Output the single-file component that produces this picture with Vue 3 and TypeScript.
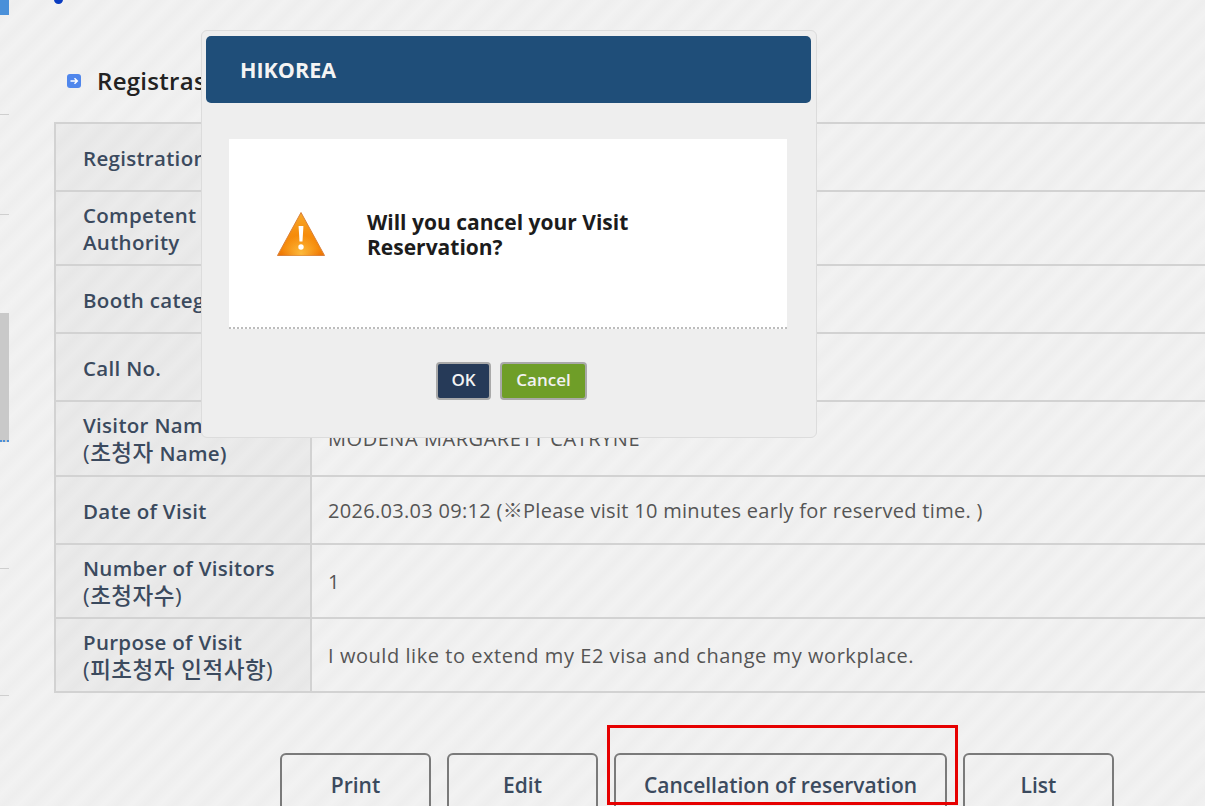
<script setup lang="ts">
interface Row {
  label: string;
  // second label line, the hangul part is set a bit larger
  ko?: string;
  rest?: string;
  value: string;
  height: number;
  tight?: boolean;
}

const rows: Row[] = [
  { label: 'Registration No.', value: '', height: 68 },
  { label: 'Competent', rest: 'Authority', value: '', height: 74 },
  { label: 'Booth category', value: '', height: 68 },
  { label: 'Call No.', value: '', height: 68 },
  { label: 'Visitor Name', ko: '(초청자', rest: ' Name)', value: 'MODENA MARGARETT CATRYNE', height: 75 },
  { label: 'Date of Visit', value: '2026.03.03 09:12 (※Please visit 10 minutes early for reserved time. )', height: 68, tight: true },
  { label: 'Number of Visitors', ko: '(초청자수)', value: '1', height: 74 },
  { label: 'Purpose of Visit', ko: '(피초청자 인적사항)', value: 'I would like to extend my E2 visa and change my workplace.', height: 74 },
]
</script>

<template>
  <div class="page">
    <aside class="side">
      <div class="side-tab"></div>
      <div class="side-line"></div>
      <div class="side-line"></div>
      <div class="side-block"></div>
      <div class="side-line third"></div>
      <div class="side-line fourth"></div>
    </aside>

    <main class="content">
      <h1 class="page-title"><span class="dot"></span><span class="title-text">Visit Reservation Details</span></h1>

      <h2 class="section-title">
        <svg class="arrow-ico" width="14" height="14" viewBox="0 0 14 14">
          <rect width="14" height="14" rx="3" fill="#4f86ec" />
          <path d="M3.5 7h6.5M7.5 4.2 10.3 7 7.5 9.8" fill="none" stroke="#fff" stroke-width="1.5" />
        </svg>
        Registrastion Information
      </h2>

      <table class="detail">
        <colgroup>
          <col class="col-label" />
          <col />
        </colgroup>
        <tbody>
          <tr v-for="row in rows" :key="row.label" :style="{ height: row.height + 'px' }">
            <th>
              <div>{{ row.label }}</div>
              <div v-if="row.ko || row.rest"><span v-if="row.ko" class="ko">{{ row.ko }}</span>{{ row.rest }}</div>
            </th>
            <td :class="{ tight: row.tight }">{{ row.value }}</td>
          </tr>
        </tbody>
      </table>

      <div class="actions">
        <button class="btn small">Print</button>
        <button class="btn small">Edit</button>
        <button class="btn wide">Cancellation of reservation</button>
        <button class="btn small">List</button>
      </div>
    </main>

    <div class="highlight"></div>

    <div class="dialog">
      <div class="dialog-head">HIKOREA</div>
      <div class="dialog-body">
        <svg class="warn" width="50" height="46" viewBox="0 0 50 46">
          <defs>
            <linearGradient id="warnFill" x1="0" y1="0" x2="0" y2="1">
              <stop offset="0" stop-color="#f7a92a" />
              <stop offset="0.5" stop-color="#f68d0c" />
              <stop offset="0.85" stop-color="#f58606" />
              <stop offset="1" stop-color="#ec7405" />
            </linearGradient>
            <radialGradient id="warnGlow" cx="0.5" cy="0.95" r="0.42">
              <stop offset="0" stop-color="#ffc94a" stop-opacity="0.8" />
              <stop offset="1" stop-color="#ffc94a" stop-opacity="0" />
            </radialGradient>
          </defs>
          <path d="M25 1.5 48.5 44.5H1.5Z" fill="url(#warnFill)" stroke="#d9803a" stroke-width="1" stroke-linejoin="round" />
          <path d="M25 1.5 48.5 44.5H1.5Z" fill="url(#warnGlow)" />
          <path d="M22.6 15h4.8l-.9 15.5h-3Z" fill="#fff" />
          <circle cx="25" cy="36" r="2.7" fill="#fff" />
        </svg>
        <p class="message">Will you cancel your Visit Reservation?</p>
      </div>
      <div class="dialog-foot">
        <button class="dlg-btn ok">OK</button>
        <button class="dlg-btn cancel">Cancel</button>
      </div>
    </div>
  </div>
</template>

<style scoped>
.page {
  position: relative;
  display: flex;
  width: 1205px;
  height: 806px;
  overflow: hidden;
  font-family: "Open Sans", "Noto Sans CJK KR", sans-serif;
  background: repeating-linear-gradient(-45deg, #f2f2f2 0, #eeeeee 10px, #f2f2f2 20px);
}

.side {
  width: 9px;
  flex: none;
}

.side-tab {
  height: 15px;
  background: #4a90d9;
}

.side-line {
  height: 1px;
  margin-top: 99px;
  background: #cfcfcf;
}

.side-block {
  height: 127px;
  margin-top: 98px;
  background: #c9c9c9;
  border-bottom: 2px dotted #4a90d9;
}

.side-line.third,
.side-line.fourth {
  margin-top: 126px;
}

.content {
  flex: 1;
  min-width: 0;
  padding-left: 45px;
}

.page-title {
  display: flex;
  align-items: flex-end;
  gap: 15px;
  height: 30px;
  margin: -23px 0 0;
  font-size: 23px;
  font-weight: 700;
  line-height: 24px;
  color: #d4d4d4;
  white-space: nowrap;
}

.title-text {
  margin-bottom: 4px;
}

.dot {
  width: 9px;
  height: 9px;
  margin-bottom: 3px;
  border-radius: 50%;
  background: #0a3cc0;
}

.section-title {
  display: flex;
  align-items: center;
  gap: 16px;
  height: 34px;
  margin: 56px 0 25px 13px;
  font-size: 24px;
  font-weight: 600;
  letter-spacing: 0.3px;
  color: #222;
  white-space: nowrap;
}

.arrow-ico {
  flex: none;
  margin-top: 2px;
}

.detail {
  width: 1180px;
  border-collapse: collapse;
  table-layout: fixed;
  border-top: 2px solid #d2d2d2;
  border-left: 2px solid #d2d2d2;
}

.col-label {
  width: 256px;
}

.detail tr {
  border-bottom: 2px solid #d2d2d2;
}

.detail th {
  padding: 2px 0 0 27px;
  border-right: 2px solid #d2d2d2;
  font-size: 20.5px;
  font-weight: 600;
  letter-spacing: 0.3px;
  line-height: 27px;
  text-align: left;
  color: #3b4a5e;
  background: repeating-linear-gradient(-45deg, #ebebeb 0, #e7e7e7 10px, #ebebeb 20px);
}

.ko {
  font-size: 22.5px;
  font-weight: 500;
  letter-spacing: 0.5px;
}

.detail td {
  padding: 0 0 0 16px;
  font-size: 20px;
  letter-spacing: 0.55px;
  color: #555;
  white-space: nowrap;
}

.detail td.tight {
  padding-bottom: 2px;
  letter-spacing: 0.3px;
}

.actions {
  display: flex;
  gap: 16px;
  margin: 60px 0 0 226px;
}

.btn {
  height: 70px;
  padding: 0 0 6px;
  border: 2px solid #7a7a7a;
  border-radius: 6px;
  background: transparent;
  font-family: inherit;
  font-size: 21px;
  font-weight: 600;
  color: #3b4a5e;
}

.btn.small {
  width: 151px;
}

.btn.wide {
  width: 333px;
}

.highlight {
  position: absolute;
  left: 607px;
  top: 725px;
  width: 351px;
  height: 80px;
  box-sizing: border-box;
  border: 3px solid #e60000;
}

.dialog {
  position: absolute;
  left: 201px;
  top: 30px;
  box-sizing: border-box;
  width: 616px;
  height: 408px;
  padding: 5px 5px 5px 4px;
  border: 1px solid #dcdcdc;
  border-radius: 6px;
  background: #eeeeee;
}

.dialog-head {
  box-sizing: border-box;
  height: 67px;
  padding-left: 34px;
  border-radius: 5px;
  background: #1f4e79;
  font-size: 21.5px;
  font-weight: 700;
  line-height: 67px;
  color: #f4f4f4;
}

.dialog-body {
  display: flex;
  align-items: center;
  box-sizing: border-box;
  height: 190px;
  margin: 36px 24px 0 23px;
  padding: 0 0 0 47px;
  border-bottom: 2px dotted #bdbdbd;
  background: #fff;
}

.warn {
  flex: none;
  margin-top: 2px;
}

.message {
  width: 290px;
  margin: 4px 0 0 41px;
  font-size: 21px;
  font-weight: 700;
  line-height: 25px;
  color: #1c1c1c;
}

.dialog-foot {
  display: flex;
  justify-content: center;
  gap: 9px;
  margin-top: 33px;
  padding-left: 6px;
}

.dlg-btn {
  height: 38px;
  padding: 0 0 3px;
  border: 2px solid #a9a9a9;
  border-radius: 4px;
  font-family: inherit;
  font-size: 17px;
  font-weight: 600;
  color: #f2f2f2;
}

.dlg-btn.ok {
  width: 55px;
  background: #263a58;
}

.dlg-btn.cancel {
  width: 87px;
  background: #6f9e28;
}
</style>
